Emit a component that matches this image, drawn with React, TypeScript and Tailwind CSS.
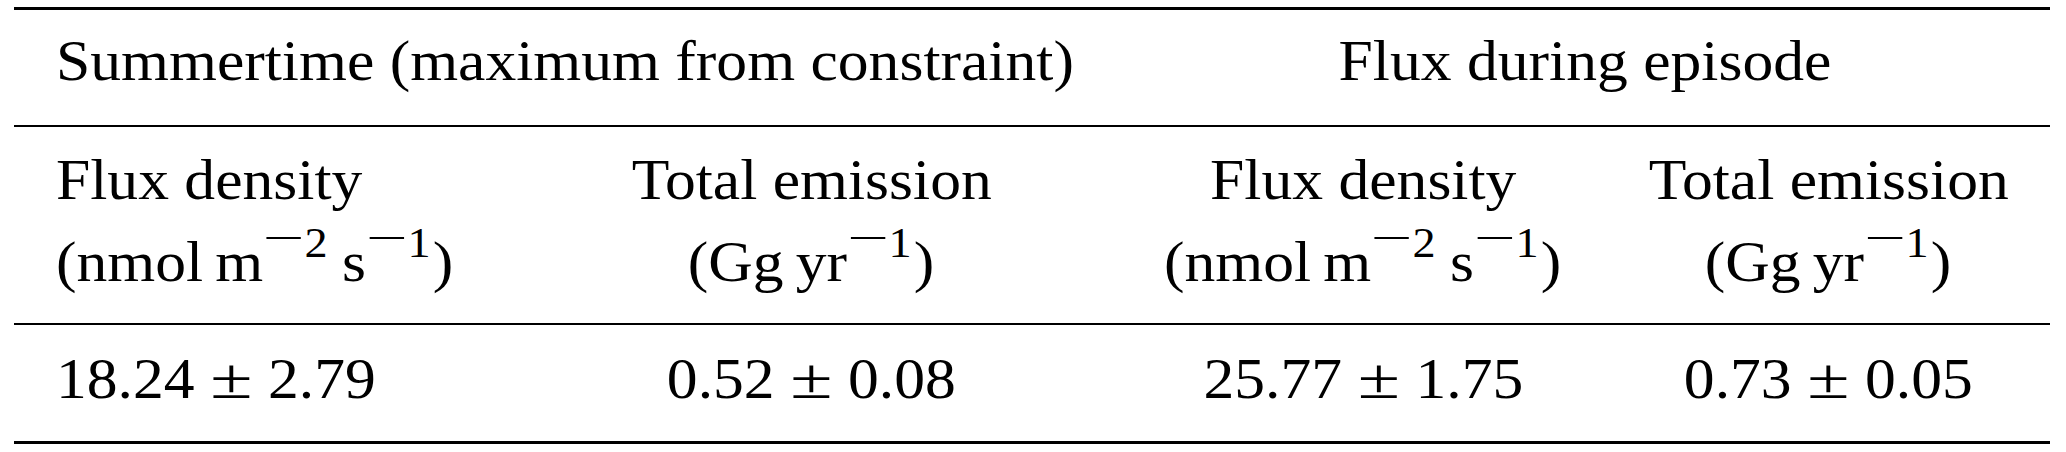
import type { ReactNode } from "react";

// a printed LaTeX table: rules, three rows, Times-like type

function Wide({ children, left }: { children: ReactNode; left?: boolean }) {
    return (
        <span
            className={
                left
                    ? "inline-block scale-x-110 origin-left whitespace-nowrap"
                    : "inline-block scale-x-110 origin-center whitespace-nowrap"
            }
        >
            {children}
        </span>
    );
}

function Sup({ children }: { children: ReactNode }) {
    return (
        <span className="relative -top-[24px] pr-[2px] text-[42px] leading-none">
            <span className="inline-block relative -top-[5px] mx-[7px] scale-x-160">−</span>
            {children}
        </span>
    );
}

function Pm() {
    return <span className="inline-block mx-[18px] scale-x-125">±</span>;
}

function Density() {
    return (
        <>
            (nmol<span className="ml-[11px]">m</span>
            <Sup>2</Sup>
            <span className="ml-[11px]">s</span>
            <Sup>1</Sup>)
        </>
    );
}

function Emission() {
    return (
        <>
            (Gg<span className="ml-[11px]">yr</span>
            <Sup>1</Sup>)
        </>
    );
}

export default function App() {
    return (
        <div className="w-[2066px] h-[452px] bg-white pt-[7px] text-black text-[56px] font-[family-name:'Liberation_Serif','Times_New_Roman',serif]">
            <div className="ml-[14px] w-[2036px]">
                <div className="h-[3px] bg-black" />

                {/* group headings */}
                <div className="grid grid-cols-[1105px_931px] h-[115px] pt-[20px] leading-[62px]">
                    <div className="pl-[42px]">
                        <Wide left>Summertime (maximum from constraint)</Wide>
                    </div>
                    <div className="text-center">
                        <Wide>Flux during episode</Wide>
                    </div>
                </div>

                <div className="h-[2px] bg-black" />

                {/* column headings */}
                <div className="grid grid-cols-[490px_615px_488px_443px] h-[196px] pt-[12px] leading-[82px]">
                    <div className="pl-[42px]">
                        <div>
                            <Wide left>Flux density</Wide>
                        </div>
                        <div>
                            <Wide left>
                                <Density />
                            </Wide>
                        </div>
                    </div>
                    <div className="text-center">
                        <div>
                            <Wide>Total emission</Wide>
                        </div>
                        <div>
                            <Wide>
                                <Emission />
                            </Wide>
                        </div>
                    </div>
                    <div className="text-center">
                        <div>
                            <Wide>Flux density</Wide>
                        </div>
                        <div>
                            <Wide>
                                <Density />
                            </Wide>
                        </div>
                    </div>
                    <div className="text-center">
                        <div>
                            <Wide>Total emission</Wide>
                        </div>
                        <div>
                            <Wide>
                                <Emission />
                            </Wide>
                        </div>
                    </div>
                </div>

                <div className="h-[2px] bg-black" />

                {/* values */}
                <div className="grid grid-cols-[490px_615px_488px_443px] h-[116px] pt-[23px] leading-[62px]">
                    <div className="pl-[42px]">
                        <Wide left>
                            18.24
                            <Pm />
                            2.79
                        </Wide>
                    </div>
                    <div className="text-center">
                        <Wide>
                            0.52
                            <Pm />
                            0.08
                        </Wide>
                    </div>
                    <div className="text-center">
                        <Wide>
                            25.77
                            <Pm />
                            1.75
                        </Wide>
                    </div>
                    <div className="text-center">
                        <Wide>
                            0.73
                            <Pm />
                            0.05
                        </Wide>
                    </div>
                </div>

                <div className="h-[3px] bg-black" />
            </div>
        </div>
    );
}
